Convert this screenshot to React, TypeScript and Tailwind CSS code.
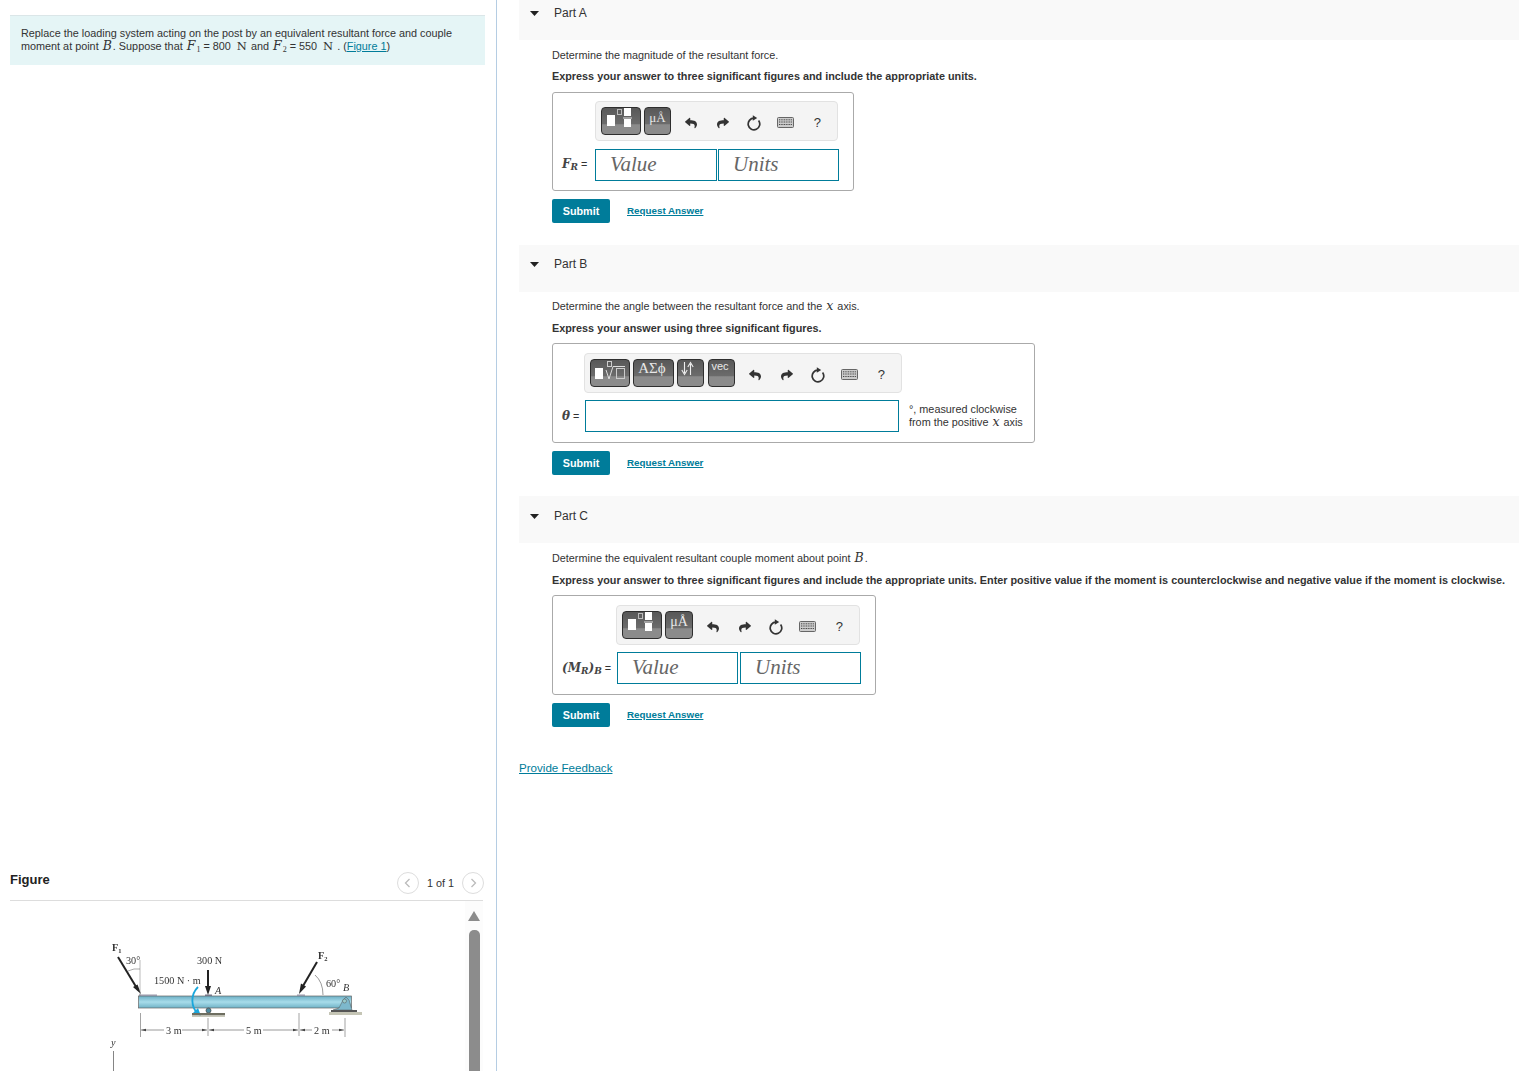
import React from 'react';
import { FaReply, FaShare } from 'react-icons/fa';

const sans = "font-['Liberation_Sans',Arial,sans-serif]";
const serif = "font-['Liberation_Serif','Times_New_Roman',serif]";
const mathFont = "font-['DejaVu_Serif',serif]";
const btn =
  'relative h-[28px] shrink-0 overflow-hidden rounded-[4px] border border-[#2e2e2e] bg-[linear-gradient(#585858_0%,#6c6c6c_62%,#8b8b8b_64%,#8b8b8b_100%)] text-[#e8e8e8]';

function TemplateButton() {
  return (
    <div className={`${btn} w-[40px]`}>
      <svg width="40" height="28" viewBox="0 0 40 28" className="block">
        <rect x="5" y="7" width="8" height="11" fill="#fff" />
        <rect x="15.5" y="1.5" width="4" height="5" fill="none" stroke="#bbb" />
        <rect x="22" y="0" width="7" height="8" fill="#fff" />
        <rect x="21" y="9.5" width="9" height="1" fill="#ddd" />
        <rect x="22" y="11" width="7" height="8" fill="#fff" />
      </svg>
    </div>
  );
}

function RadicalButton() {
  return (
    <div className={`${btn} w-[40px]`}>
      <svg width="40" height="28" viewBox="0 0 40 28" className="block">
        <rect x="4" y="8" width="8" height="11" fill="#fff" />
        <rect x="16.5" y="1.5" width="4" height="5" fill="none" stroke="#ccc" />
        <path d="M15 10 L18 19 L22 6.5 L34 6.5" fill="none" stroke="#ddd" />
        <rect x="25.5" y="8.5" width="8" height="10" fill="none" stroke="#ccc" />
      </svg>
    </div>
  );
}

function ArrowsButton() {
  return (
    <div className={`${btn} mr-[1px] w-[27px]`}>
      <svg width="27" height="28" viewBox="0 0 27 28" className="block">
        <path d="M6.500 2 V13 M3.800 10 L6.500 14.500 L9.200 10" fill="none" stroke="#eee" strokeWidth="1.100" />
        <path d="M12.500 15 V4 M9.800 7 L12.500 2.500 L15.200 7" fill="none" stroke="#eee" strokeWidth="1.100" />
      </svg>
    </div>
  );
}

function TextButton({ width, children }: { width: string; children: React.ReactNode }) {
  return <div className={`${btn} ${width} flex justify-center`}>{children}</div>;
}

function ResetIcon() {
  return (
    <svg width="16" height="16" viewBox="0 0 16 16">
      <path d="M8 3.200 A5.800 5.800 0 1 0 12.600 5.500" fill="none" stroke="#333" strokeWidth="1.700" />
      <path d="M6.800 0.200 L11.200 3 L6.800 5.800 Z" fill="#333" />
    </svg>
  );
}

function KeyboardIcon() {
  return (
    <svg width="17" height="11" viewBox="0 0 17 11">
      <rect x="0.500" y="0.500" width="16" height="10" rx="1" fill="#ccc" stroke="#666" />
      <path d="M2 2.800 H15 M2 5 H15" stroke="#444" strokeWidth="1" strokeDasharray="1 0.700" />
      <path d="M2 7.500 H15" stroke="#444" strokeWidth="1" strokeDasharray="1 0.700" />
    </svg>
  );
}

function ToolIcons() {
  const slot = 'flex h-full w-[31.5px] shrink-0 items-center justify-center text-[#333]';
  return (
    <div className="ml-[1.5px] flex h-[30px] items-center pt-[1px]">
      <div className={slot}><FaReply size={12} /></div>
      <div className={slot}><FaShare size={12} /></div>
      <div className={slot}><ResetIcon /></div>
      <div className={slot}><KeyboardIcon /></div>
      <div className={`${slot} text-[13px]`}>?</div>
    </div>
  );
}

function Toolbar({ className, children }: { className: string; children: React.ReactNode }) {
  return (
    <div className={`flex h-[40px] items-start gap-[3px] rounded-[4px] border border-[#e2e2e2] bg-[#f4f4f4] pl-[5px] pt-[5px] ${className}`}>
      {children}
      <ToolIcons />
    </div>
  );
}

function Field({ text, className }: { text?: string; className: string }) {
  return (
    <div className={`h-[32px] border border-[#007c9a] bg-white text-[21px] italic leading-[28px] text-[#666] ${serif} ${className}`}>
      {text}
    </div>
  );
}

function Actions() {
  return (
    <div className="mt-[8px] flex items-center">
      <div className="flex h-[24px] w-[58px] items-center justify-center rounded-[2px] bg-[#007c9a] text-[10.8px] font-bold text-white">
        Submit
      </div>
      <a className="ml-[17px] pb-[2px] text-[9.8px] font-bold text-[#007c9a] underline">Request Answer</a>
    </div>
  );
}

function PartHeader({ label, className }: { label: string; className: string }) {
  return (
    <div className={`flex items-center bg-[#f9f9f9] text-[12px] text-[#333] ${className}`}>
      <svg width="9" height="5" viewBox="0 0 9 5" className="ml-[11px] mr-[15px]">
        <path d="M0 0 H9 L4.500 5 Z" fill="#222" />
      </svg>
      {label}
    </div>
  );
}

// inline maths: x, B, F_1 and so on
function V({ children }: { children: React.ReactNode }) {
  return <i className={`${mathFont} px-[1px] text-[12.5px] leading-[0]`}>{children}</i>;
}

function Unit() {
  return <span className={`${mathFont} ml-[3px] mr-[1px] text-[11.5px] leading-[0]`}>N</span>;
}

function LabelVar({ children }: { children: React.ReactNode }) {
  return <i className={`${mathFont} text-[12px] font-bold leading-[0] text-[#444]`}>{children}</i>;
}

function LabelSub({ children }: { children: React.ReactNode }) {
  return <sub className={`${mathFont} text-[9px] font-bold italic text-[#444]`}>{children}</sub>;
}

function Diagram() {
  return (
    <svg width="290" height="141" viewBox="90 930 290 141" className="block" style={{ filter: 'blur(0.3px)' }}>
      <defs>
        <linearGradient id="beam" x1="0" y1="0" x2="0" y2="1">
          <stop offset="0" stopColor="#6aaec4" />
          <stop offset="0.5" stopColor="#a8dcea" />
          <stop offset="1" stopColor="#6fb2c6" />
        </linearGradient>
      </defs>
      <g fontFamily="'Liberation Serif', serif" fontSize="10.2" fill="#333">
        <rect x="138.500" y="996" width="213" height="12" fill="url(#beam)" stroke="#666" strokeWidth="0.700" />
        <rect x="139" y="994.500" width="18" height="1.500" fill="#99a" />
        <rect x="297" y="994.500" width="8" height="1.500" fill="#99a" />
        <rect x="205" y="994.500" width="7" height="1.500" fill="#778" />

        <path d="M118 957 L138 990" stroke="#222" strokeWidth="2" />
        <path d="M141 994 L133 987 L137.500 984.500 Z" fill="#222" />
        <path d="M317 962 L303 986" stroke="#222" strokeWidth="2" />
        <path d="M299 994 L301 983.500 L306 986.500 Z" fill="#222" />
        <path d="M208 970 L208 988" stroke="#222" strokeWidth="2" />
        <path d="M208 995 L205 986 L211 986 Z" fill="#222" />

        <path d="M140 996 V960" stroke="#777" strokeWidth="0.500" fill="none" />
        <path d="M128 971 Q134 968 140 969" stroke="#555" strokeWidth="0.500" fill="none" />
        <path d="M315 975 Q323 982 323 995" stroke="#555" strokeWidth="0.600" fill="none" />

        <path d="M198 987 C190 995 191 1007 198 1014" stroke="#1aa7dc" strokeWidth="1.800" fill="none" />
        <path d="M201 1016 L193 1013 L198 1008 Z" fill="#1aa7dc" />

        <circle cx="208.500" cy="1010.500" r="2.500" fill="#4d8ba0" stroke="#444" strokeWidth="0.700" />
        <rect x="192" y="1013" width="33" height="2.500" fill="#6e6e60" />
        <rect x="192" y="1015.500" width="33" height="1.500" fill="#c9c9bb" />

        <path d="M333 1010 L339 1008 L343 1000 L346 997 L349 1000 L352 1010 Z" fill="#7db8cc" stroke="#555" strokeWidth="0.500" />
        <circle cx="344.500" cy="1001" r="2" fill="#9cc" stroke="#555" strokeWidth="0.500" />
        <rect x="331" y="1010" width="26" height="2" fill="#555" />
        <rect x="329" y="1012" width="33" height="3" fill="#c5c5b5" />

        <path d="M140.500 1013 V1037 M208 1018 V1036 M299 1013 V1036 M345 1018 V1037" stroke="#666" strokeWidth="0.600" />
        <path d="M141 1030 H164 M182 1030 H207 M209 1030 H244 M263 1030 H298 M300 1030 H312 M332 1030 H344" stroke="#555" strokeWidth="0.600" />
        <path d="M141 1030 l5 -1.200 v2.400 Z M207 1030 l-5 -1.200 v2.400 Z M209 1030 l5 -1.200 v2.400 Z M298 1030 l-5 -1.200 v2.400 Z M300 1030 l5 -1.200 v2.400 Z M344 1030 l-5 -1.200 v2.400 Z" fill="#444" />

        <text x="112" y="951" fontWeight="700">F<tspan fontSize="6.500" dy="2">1</tspan></text>
        <text x="126" y="964">30°</text>
        <text x="197" y="964">300 N</text>
        <text x="154" y="984">1500 N · m</text>
        <text x="215" y="994" fontStyle="italic">A</text>
        <text x="318" y="959" fontWeight="700">F<tspan fontSize="6.500" dy="2">2</tspan></text>
        <text x="326" y="987">60°</text>
        <text x="343" y="991" fontStyle="italic">B</text>
        <text x="166" y="1034">3 m</text>
        <text x="246" y="1034">5 m</text>
        <text x="314" y="1034">2 m</text>
        <text x="111" y="1046" fontStyle="italic">y</text>
        <path d="M113.500 1051 V1071" stroke="#666" strokeWidth="0.800" />
      </g>
    </svg>
  );
}

function PagerButton({ dir }: { dir: 'left' | 'right' }) {
  return (
    <div className="flex h-[22px] w-[22px] items-center justify-center rounded-full border border-[#ddd] bg-white">
      <svg width="7" height="10" viewBox="0 0 7 10">
        <path d={dir === 'left' ? 'M5.500 1 L1.500 5 L5.500 9' : 'M1.500 1 L5.500 5 L1.500 9'} fill="none" stroke="#bbb" strokeWidth="1.300" />
      </svg>
    </div>
  );
}

function LeftColumn() {
  return (
    <div className="h-[1071px] w-[497px] shrink-0 overflow-hidden border-r border-[#b5cde3] pl-[10px] pr-[11px] pt-[15px]">
      <div className="h-[50px] border-t border-[#dbe6e8] bg-[#e5f5f6] pl-[11px] pt-[11px] text-[10.83px] leading-[13px] text-[#333]">
        <p>Replace the loading system acting on the post by an equivalent resultant force and couple</p>
        <p>
          moment at point <V>B</V>. Suppose that <V>F</V><sub className={`${serif} text-[8px]`}>1</sub>{' '}
          = 800 <Unit /> and <V>F</V>
          <sub className={`${serif} text-[8px]`}>2</sub> = 550 <Unit /> . (
          <a className="text-[#007c9a] underline">Figure 1</a>)
        </p>
      </div>

      <div className="mr-[2px] mt-[801px] flex h-[35px] items-start justify-between border-b border-[#ddd]">
        <h2 className="text-[13px] font-bold leading-[28px] text-[#222]">Figure</h2>
        <div className="-mr-[1px] flex items-center pt-[6px]">
          <PagerButton dir="left" />
          <span className="mx-[8px] pt-[1px] text-[10.83px] text-[#333]">1 of 1</span>
          <PagerButton dir="right" />
        </div>
      </div>

      <div className="relative h-[171px]">
        <div className="ml-[80px] pt-[29px]">
          <Diagram />
        </div>
        <div className="absolute right-[2px] top-0 flex h-full w-[18px] flex-col items-center bg-[#fcfcfc] pt-[10px]">
          <div className="h-0 w-0 border-x-[6.5px] border-b-[10px] border-x-transparent border-b-[#8c8c8c]" />
          <div className="mt-[9px] h-[150px] w-[11px] rounded-t-[5px] bg-[#8c8c8c]" />
        </div>
      </div>
    </div>
  );
}

export default function App() {
  return (
    <div className={`flex h-[1071px] overflow-hidden bg-white text-[#333] ${sans}`}>
      <LeftColumn />

      <div className="min-w-0 flex-1 pl-[22px] text-[10.83px] leading-[13px]">
        {/* Part A */}
        <PartHeader label="Part A" className="h-[40px] pb-[13px]" />
        <div className="pl-[33px] pt-[9px]">
          <p>Determine the magnitude of the resultant force.</p>
          <p className="mt-[8px] font-bold">Express your answer to three significant figures and include the appropriate units.</p>
          <div className="mt-[9px] h-[99px] w-[302px] rounded-[3px] border border-[#aaa] pl-[9px] pt-[8px]">
            <Toolbar className="ml-[33px] w-[243px]">
              <TemplateButton />
              <TextButton width="w-[27px]"><span className={`${serif} text-[13px] leading-[19px]`}>μÅ</span></TextButton>
            </Toolbar>
            <div className="mt-[8px] flex items-center">
              <div className="w-[33px] whitespace-nowrap pb-[2px]">
                <LabelVar>F</LabelVar><LabelSub>R</LabelSub> =
              </div>
              <Field text="Value" className="w-[122px] pl-[14px]" />
              <Field text="Units" className="ml-[1px] w-[121px] pl-[14px]" />
            </div>
          </div>
          <Actions />
        </div>

        {/* Part B */}
        <PartHeader label="Part B" className="mt-[22px] h-[47px] pb-[9px]" />
        <div className="pl-[33px] pt-[8px]">
          <p>Determine the angle between the resultant force and the <V>x</V> axis.</p>
          <p className="mt-[9px] font-bold">Express your answer using three significant figures.</p>
          <div className="mt-[8px] h-[100px] w-[483px] rounded-[3px] border border-[#aaa] pl-[9px] pt-[9px]">
            <Toolbar className="ml-[22px] w-[318px]">
              <RadicalButton />
              <TextButton width="w-[41px]"><span className={`${serif} pr-[3px] text-[15px] leading-[17px]`}>ΑΣϕ</span></TextButton>
              <ArrowsButton />
              <TextButton width="w-[27px]"><span className="pr-[3px] text-[11px] leading-[13px]">vec</span></TextButton>
            </Toolbar>
            <div className="mt-[7px] flex items-center">
              <div className="w-[23px] whitespace-nowrap"><LabelVar>θ</LabelVar> =</div>
              <Field className="w-[314px]" />
              <div className="ml-[10px] leading-[13px]">
                <p>°, measured clockwise</p>
                <p>from the positive <V>x</V> axis</p>
              </div>
            </div>
          </div>
          <Actions />
        </div>

        {/* Part C */}
        <PartHeader label="Part C" className="mt-[21px] h-[47px] pb-[7px]" />
        <div className="pl-[33px] pt-[9px]">
          <p>Determine the equivalent resultant couple moment about point <V>B</V>.</p>
          <p className="mt-[9px] whitespace-nowrap font-bold">
            Express your answer to three significant figures and include the appropriate units. Enter positive value if the moment is counterclockwise and negative value if the moment is clockwise.
          </p>
          <div className="mt-[8px] h-[100px] w-[324px] rounded-[3px] border border-[#aaa] pl-[9px] pt-[9px]">
            <Toolbar className="ml-[54px] w-[244px]">
              <TemplateButton />
              <TextButton width="w-[28px]"><span className={`${serif} text-[14px] leading-[19px]`}>μÅ</span></TextButton>
            </Toolbar>
            <div className="mt-[7px] flex items-center">
              <div className="w-[55px] whitespace-nowrap">
                <LabelVar>(</LabelVar><LabelVar>M</LabelVar><LabelSub>R</LabelSub>
                <LabelVar>)</LabelVar><LabelSub>B</LabelSub> =
              </div>
              <Field text="Value" className="w-[121px] pl-[14px]" />
              <Field text="Units" className="ml-[2px] w-[121px] pl-[14px]" />
            </div>
          </div>
          <Actions />
        </div>

        <a className="mt-[34px] block text-[11.6px] text-[#007c9a] underline">Provide Feedback</a>
      </div>
    </div>
  );
}
